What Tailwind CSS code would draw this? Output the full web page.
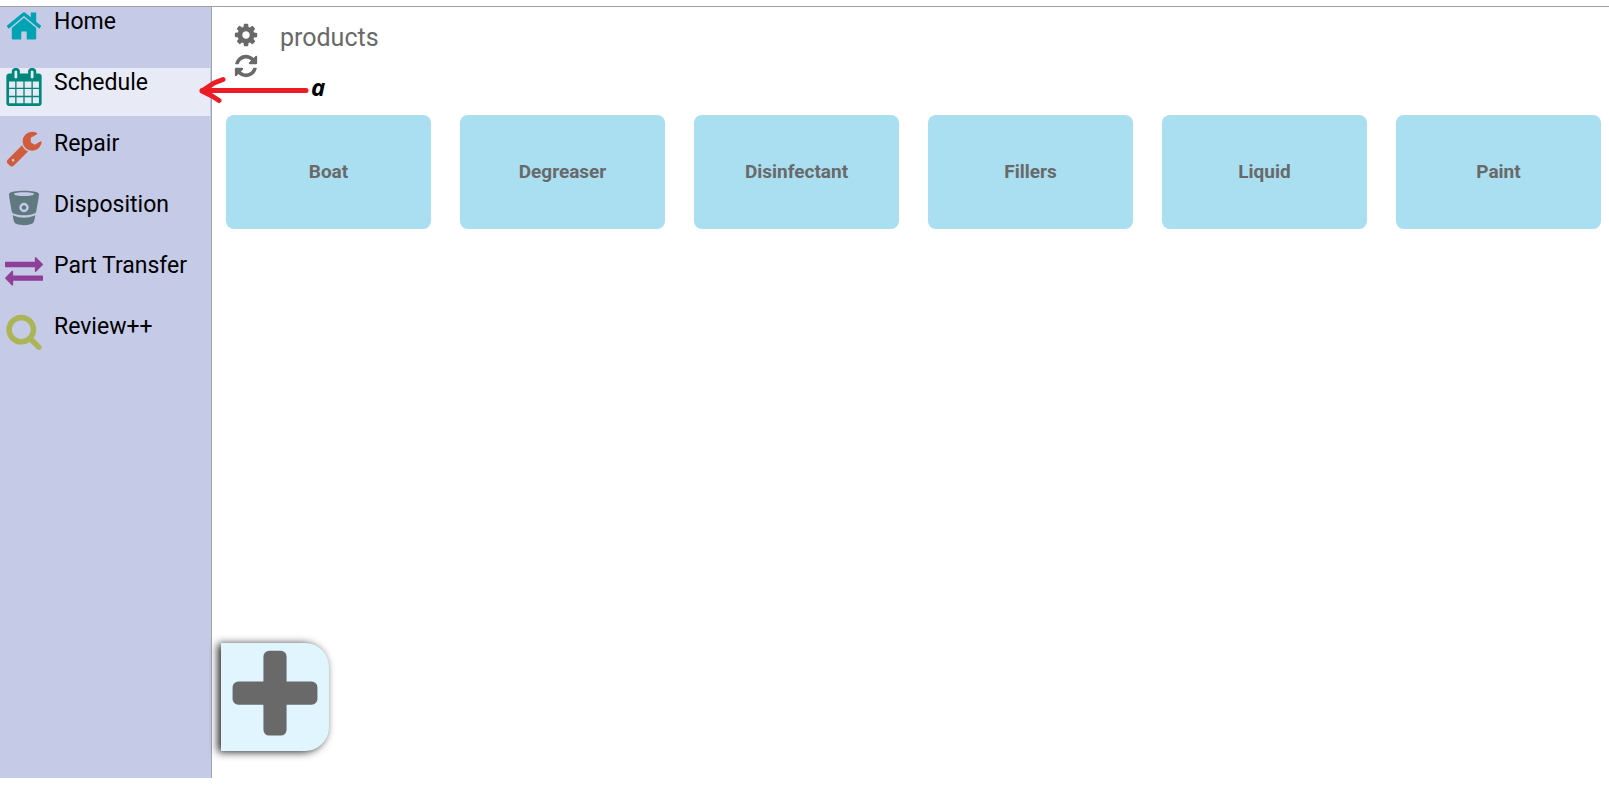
<!DOCTYPE html>
<html lang="en" class="h-full">
  <head>
    <meta charset="UTF-8">
    <meta name="viewport" content="width=device-width, initial-scale=1.0">
    <script src="https://cdn.jsdelivr.net/npm/@tailwindcss/browser@4"></script>
    <title>Products</title>
  </head>

  <body class="h-full bg-white font-['Roboto',sans-serif]">
    <div class="relative min-h-full flex pt-1.5 pb-2.5">
      <nav class="w-[212px] shrink-0 border-t border-r border-[#a0a0a0] border-r-[#9fa2b2] bg-[#c5cae6] pr-px">
        <ul class="flex flex-col gap-[13px] text-[23px] leading-[29px] text-black">
          <li>
            <a href="#" class="flex h-12 items-start gap-[11px] pl-[5px] hover:bg-[#e8eaf6]">
              <svg class="size-[38px] text-[#00a3b4]" viewBox="0 0 1792 1792" fill="currentColor" aria-hidden="true"><path d="M1472 992v480q0 26-19 45t-45 19h-384v-384h-256v384h-384q-26 0-45-19t-19-45v-480q0-1 .5-3t.5-3l575-474 575 474q1 2 1 6zm223-69l-62 74q-8 9-21 11h-3q-13 0-21-7l-692-577-692 577q-12 8-24 7-13-2-21-11l-62-74q-8-10-7-23.5t11-21.5l719-599q32-26 76-26t76 26l244 204v-195q0-14 9-23t23-9h192q14 0 23 9t9 23v408l219 182q10 8 11 21.5t-7 23.5z"/></svg>
              <span>Home</span>
            </a>
          </li>
          <li>
            <a href="#" aria-current="page" class="flex h-12 items-start gap-[11px] pl-[5px] bg-[#e8eaf6]">
              <svg class="size-[38px] text-[#00897b]" viewBox="0 0 1792 1792" fill="currentColor" aria-hidden="true"><path d="M192 1664h288v-288h-288v288zm352 0h320v-288h-320v288zm-352-352h288v-320h-288v320zm352 0h320v-320h-320v320zm-352-384h288v-288h-288v288zm736 736h320v-288h-320v288zm-384-736h320v-288h-320v288zm768 736h288v-288h-288v288zm-384-352h320v-320h-320v320zm-352-864v-288q0-13-9.500-22.500t-22.500-9.500h-64q-13 0-22.500 9.500t-9.500 22.500v288q0 13 9.500 22.500t22.500 9.500h64q13 0 22.500-9.500t9.500-22.500zm736 864h288v-320h-288v320zm-384-384h320v-288h-320v288zm384 0h288v-288h-288v288zm32-480v-288q0-13-9.500-22.500t-22.500-9.500h-64q-13 0-22.500 9.500t-9.500 22.500v288q0 13 9.500 22.500t22.500 9.500h64q13 0 22.500-9.500t9.500-22.500zm384-64v1280q0 52-38 90t-90 38h-1408q-52 0-90-38t-38-90v-1280q0-52 38-90t90-38h128v-96q0-66 47-113t113-47h64q66 0 113 47t47 113v96h384v-96q0-66 47-113t113-47h64q66 0 113 47t47 113v96h128q52 0 90 38t38 90z"/></svg>
              <span>Schedule</span>
            </a>
          </li>
          <li>
            <a href="#" class="flex h-12 items-start gap-[11px] pl-[5px] hover:bg-[#e8eaf6]">
              <svg class="size-[38px] text-[#d05c3c]" viewBox="0 0 1792 1792" fill="currentColor" aria-hidden="true"><path d="M448 1472q0-26-19-45t-45-19-45 19-19 45 19 45 45 19 45-19 19-45zm644-420l-682 682q-37 37-90 37-52 0-91-37l-106-108q-38-36-38-90 0-53 38-91l681-681q39 98 114.500 173.500t173.500 114.500zm634-435q0 39-23 106-47 134-164.500 217.500t-258.500 83.500q-185 0-316.500-131.500t-131.500-316.500 131.500-316.500 316.500-131.500q58 0 121.500 16.500t107.500 46.500q16 11 16 28t-16 28l-293 169v224l193 107q5-3 79-48.500t135.500-81 70.500-35.500q15 0 23.500 10t8.500 25z"/></svg>
              <span>Repair</span>
            </a>
          </li>
          <li>
            <a href="#" class="flex h-12 items-start gap-[11px] pl-[5px] hover:bg-[#e8eaf6]">
              <svg class="size-[38px] text-[#607880]" viewBox="0 1 38 38" fill="currentColor" fill-rule="evenodd" aria-hidden="true">
                <path d="M4 5C4.500 .600 33.500 .600 34 5C34 8 32.200 17 31.200 22.500C30.600 27.500 7.400 27.500 6.800 22.500C5.800 17 4 8 4 5ZM9 5C9 7.700 29 7.700 29 5C29 2.700 9 2.700 9 5Z"/>
                <circle cx="19" cy="18.500" r="3.500" fill="none" stroke="#c5cae6" stroke-width="2.400"/>
                <path d="M7.700 26.300Q8.300 26.100 9 26.700Q19 31 29 26.700Q29.700 26.100 30.300 26.300Q29.700 31 28.800 33C26.500 37.200 11.500 37.200 9.200 33Q8.300 31 7.700 26.300Z"/>
              </svg>
              <span>Disposition</span>
            </a>
          </li>
          <li>
            <a href="#" class="flex h-12 items-start gap-[11px] pl-[5px] hover:bg-[#e8eaf6]">
              <svg class="size-[38px] text-[#8e3f97]" viewBox="0 0 1792 1792" fill="currentColor" aria-hidden="true"><path d="M1792 1184v192q0 13-9.500 22.500t-22.500 9.500h-1376v192q0 13-9.500 22.500t-22.500 9.500q-12 0-24-10l-319-320q-9-9-9-22 0-14 9-23l320-320q9-9 23-9 13 0 22.500 9.500t9.500 22.500v192h1376q13 0 22.500 9.500t9.500 22.500zm0-544q0 14-9 23l-320 320q-9 9-23 9-13 0-22.500-9.500t-9.500-22.500v-192h-1376q-13 0-22.500-9.500t-9.500-22.500v-192q0-13 9.500-22.500t22.500-9.500h1376v-192q0-14 9-23t23-9q12 0 24 10l319 319q9 9 9 23z"/></svg>
              <span>Part Transfer</span>
            </a>
          </li>
          <li>
            <a href="#" class="flex h-12 items-start gap-[11px] pl-[5px] hover:bg-[#e8eaf6]">
              <svg class="size-[38px] text-[#abb555]" viewBox="0 0 1792 1792" fill="currentColor" aria-hidden="true"><path d="M1216 832q0-185-131.500-316.500t-316.500-131.500-316.500 131.500-131.500 316.500 131.500 316.500 316.500 131.500 316.500-131.500 131.500-316.500zm512 832q0 52-38 90t-90 38q-54 0-90-38l-343-342q-179 124-399 124-143 0-273.500-55.500t-225-150-150-225-55.500-273.500 55.500-273.500 150-225 225-150 273.500-55.500 273.500 55.500 225 150 150 225 55.500 273.500q0 220-124 399l343 343q37 37 37 90z"/></svg>
              <span>Review++</span>
            </a>
          </li>
        </ul>
      </nav>

      <main class="flex flex-1 flex-col border-t border-[#a0a0a0] text-[#696969]">
        <header class="flex items-start gap-[21px] pt-[15px] pl-[21px]">
          <div class="flex flex-col gap-[5px]">
            <button type="button" aria-label="Settings" class="cursor-pointer">
              <svg class="size-[26px]" viewBox="0 0 1792 1792" fill="currentColor"><path d="M1152 896q0-106-75-181t-181-75-181 75-75 181 75 181 181 75 181-75 75-181zm512-109v222q0 12-8 23t-20 13l-185 28q-19 54-39 91 35 50 107 138 10 12 10 25t-9 23q-27 37-99 108t-94 71q-12 0-26-9l-138-108q-44 23-91 38-16 136-29 186-7 28-36 28h-222q-14 0-24.500-8.500t-11.500-21.500l-28-184q-49-16-90-37l-141 107q-10 9-25 9-14 0-25-11-126-114-165-168-7-10-7-23 0-12 8-23 15-21 51-66.500t54-70.500q-27-50-41-99l-183-27q-13-2-21-12.500t-8-23.500v-222q0-12 8-23t19-13l186-28q14-46 39-92-40-57-107-138-10-12-10-24 0-10 9-23 26-36 98.500-107.500t94.500-71.500q13 0 26 10l138 107q44-23 91-38 16-136 29-186 7-28 36-28h222q14 0 24.500 8.500t11.500 21.500l28 184q49 16 90 37l142-107q9-9 24-9 13 0 25 10 129 119 165 170 7 8 7 22 0 12-8 23-15 21-51 66.500t-54 70.500q26 50 41 98l183 28q13 2 21 12.500t8 23.500z"/></svg>
            </button>
            <button type="button" aria-label="Refresh" class="cursor-pointer">
              <svg class="size-[26px]" viewBox="0 0 1792 1792" fill="currentColor"><path d="M1639 1056q0 5-1 7-64 268-268 434.500t-478 166.500q-146 0-282.500-55t-243.500-157l-129 129q-19 19-45 19t-45-19-19-45v-448q0-26 19-45t45-19h448q26 0 45 19t19 45-19 45l-137 137q71 66 161 102t187 36q134 0 250-65t186-179q11-17 53-117 8-23 30-23h192q13 0 22.500 9.500t9.500 22.500zm25-800v448q0 26-19 45t-45 19h-448q-26 0-45-19t-19-45 19-45l138-138q-148-137-349-137-134 0-250 65t-186 179q-11 17-53 117-8 23-30 23h-199q-13 0-22.500-9.500t-9.500-22.500v-7q65-268 270-434.500t480-166.500q146 0 284 55.500t245 156.500l130-129q19-19 45-19t45 19 19 45z"/></svg>
            </button>
          </div>
          <h1 class="text-[25px] leading-8">products</h1>
        </header>

        <div class="grid grid-cols-6 gap-[29px] pt-9 pr-2 pl-3.5 text-[19px] font-bold">
          <button type="button" class="h-[114px] cursor-pointer rounded-lg bg-[#aadff1]">Boat</button>
          <button type="button" class="h-[114px] cursor-pointer rounded-lg bg-[#aadff1]">Degreaser</button>
          <button type="button" class="h-[114px] cursor-pointer rounded-lg bg-[#aadff1]">Disinfectant</button>
          <button type="button" class="h-[114px] cursor-pointer rounded-lg bg-[#aadff1]">Fillers</button>
          <button type="button" class="h-[114px] cursor-pointer rounded-lg bg-[#aadff1]">Liquid</button>
          <button type="button" class="h-[114px] cursor-pointer rounded-lg bg-[#aadff1]">Paint</button>
        </div>

        <div class="mt-auto pb-[27px] pl-[9px]">
          <button type="button" aria-label="Add product" class="block size-[108px] cursor-pointer rounded-r-3xl bg-[#e1f5fe] shadow-[-3px_1px_8px_#222]">
            <svg class="size-[108px]" viewBox="0 0 1792 1792" fill="currentColor"><path d="M1600 736v192q0 40-28 68t-68 28h-416v416q0 40-28 68t-68 28h-192q-40 0-68-28t-28-68v-416h-416q-40 0-68-28t-28-68v-192q0-40 28-68t68-28h416v-416q0-40 28-68t68-28h192q40 0 68 28t28 68v416h416q40 0 68 28t28 68z"/></svg>
          </button>
        </div>
      </main>

      <!-- callout over the Schedule item -->
      <div class="pointer-events-none absolute top-[74px] left-[197px] flex items-start gap-px">
        <svg class="h-8 w-[113px]" viewBox="0 0 113 32" fill="none" stroke="#ed1c24" stroke-width="5" stroke-linecap="round" stroke-linejoin="round" aria-hidden="true">
          <path d="M109 16.500H5M26 5.500L17 9L5 17L15 22L22 26.500"/>
        </svg>
        <span class="font-['Open_Sans',sans-serif] text-2xl leading-[26px] font-bold text-black italic">a</span>
      </div>
    </div>
  </body>
</html>
